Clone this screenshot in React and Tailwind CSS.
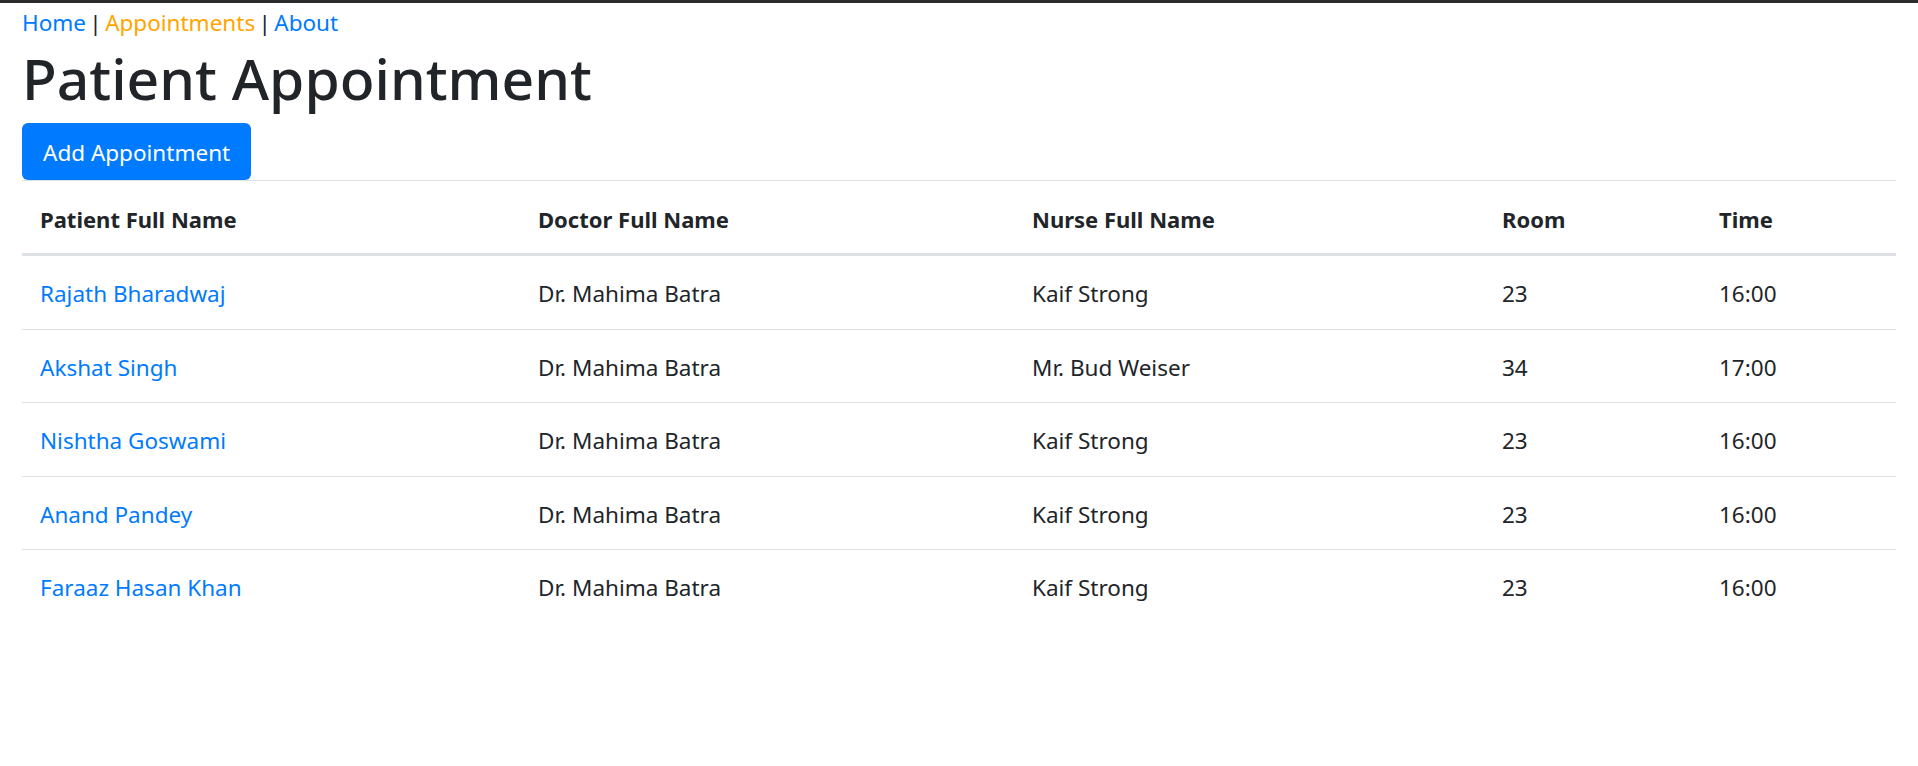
const appointments = [
  { patient: "Rajath Bharadwaj", doctor: "Dr. Mahima Batra", nurse: "Kaif Strong", room: "23", time: "16:00" },
  { patient: "Akshat Singh", doctor: "Dr. Mahima Batra", nurse: "Mr. Bud Weiser", room: "34", time: "17:00" },
  { patient: "Nishtha Goswami", doctor: "Dr. Mahima Batra", nurse: "Kaif Strong", room: "23", time: "16:00" },
  { patient: "Anand Pandey", doctor: "Dr. Mahima Batra", nurse: "Kaif Strong", room: "23", time: "16:00" },
  { patient: "Faraaz Hasan Khan", doctor: "Dr. Mahima Batra", nurse: "Kaif Strong", room: "23", time: "16:00" },
];

export default function App() {
  return (
    <div className="min-h-screen bg-white font-['Noto_Sans','Open_Sans',sans-serif] text-[22.5px] leading-[36px] text-[#212529]">
      <div className="h-[3px] bg-[#2b2b2b]" />
      <div className="px-[22px]">
        <nav className="h-[36px] pt-[2px] [word-spacing:-2.5px]">
          <a href="#" className="text-[#007bff]">Home</a>
          {" | "}
          <a href="#" className="text-[#ffa500]">Appointments</a>
          {" | "}
          <a href="#" className="text-[#007bff]">About</a>
        </nav>
        <h1 className="mb-[12px] h-[72px] pt-[3px] text-[57px] font-medium leading-[72px]">Patient Appointment</h1>
        <button className="h-[57px] rounded-[6px] bg-[#007bff] px-[21px] pt-[2px] text-white">
          Add Appointment
        </button>
        <table className="w-full table-fixed border-collapse text-left">
          <thead>
            <tr className="border-t border-[#dee2e6]">
              <th className="w-[498px] border-b-[3px] border-[#dee2e6] px-[18px] pt-[20px] pb-[16px] text-[22px] font-bold">Patient Full Name</th>
              <th className="w-[494px] border-b-[3px] border-[#dee2e6] px-[18px] pt-[20px] pb-[16px] text-[22px] font-bold">Doctor Full Name</th>
              <th className="w-[470px] border-b-[3px] border-[#dee2e6] px-[18px] pt-[20px] pb-[16px] text-[22px] font-bold">Nurse Full Name</th>
              <th className="w-[217px] border-b-[3px] border-[#dee2e6] px-[18px] pt-[20px] pb-[16px] text-[22px] font-bold">Room</th>
              <th className="border-b-[3px] border-[#dee2e6] px-[18px] pt-[20px] pb-[16px] text-[22px] font-bold">Time</th>
            </tr>
          </thead>
          <tbody>
            {appointments.map((a, i) => (
              <tr key={i} className={i === 0 ? "" : "border-t border-[#dee2e6]"}>
                <td className="px-[18px] pt-[20px] pb-[16px] leading-[36.5px]">
                  <a href="#" className="text-[#007bff]">{a.patient}</a>
                </td>
                <td className="px-[18px] pt-[20px] pb-[16px] leading-[36.5px]">{a.doctor}</td>
                <td className="px-[18px] pt-[20px] pb-[16px] leading-[36.5px]">{a.nurse}</td>
                <td className="px-[18px] pt-[20px] pb-[16px] leading-[36.5px]">{a.room}</td>
                <td className="px-[18px] pt-[20px] pb-[16px] leading-[36.5px]">{a.time}</td>
              </tr>
            ))}
          </tbody>
        </table>
      </div>
    </div>
  );
}
